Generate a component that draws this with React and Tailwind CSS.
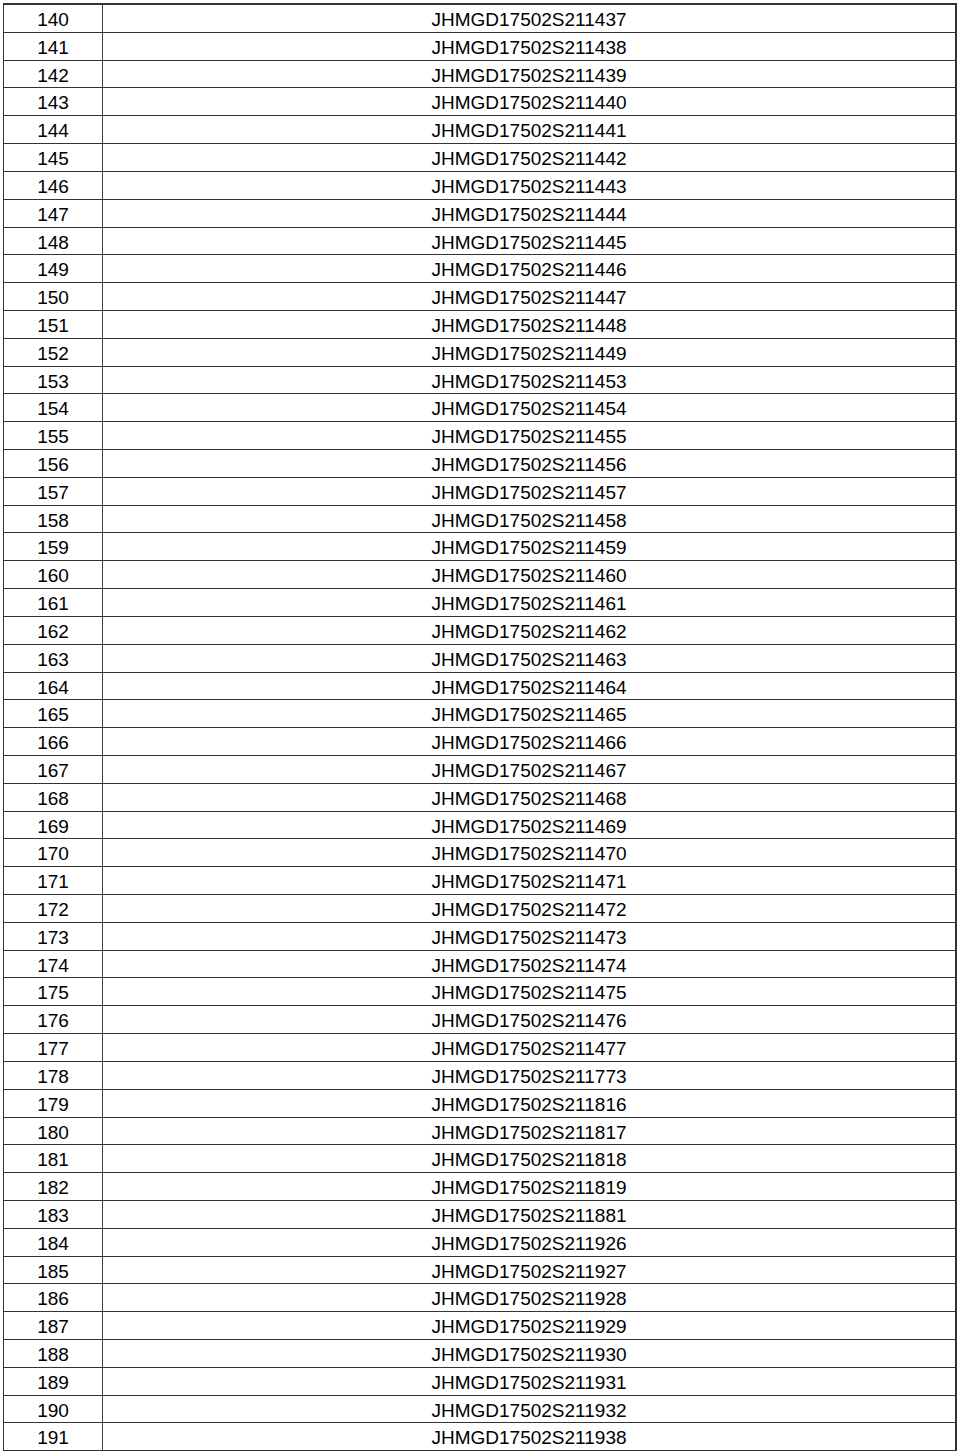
import React from 'react';

const codes = [
  '211437', '211438', '211439', '211440', '211441', '211442', '211443', '211444',
  '211445', '211446', '211447', '211448', '211449', '211453', '211454', '211455',
  '211456', '211457', '211458', '211459', '211460', '211461', '211462', '211463',
  '211464', '211465', '211466', '211467', '211468', '211469', '211470', '211471',
  '211472', '211473', '211474', '211475', '211476', '211477', '211773', '211816',
  '211817', '211818', '211819', '211881', '211926', '211927', '211928', '211929',
  '211930', '211931', '211932', '211938',
];

function App() {
  return (
    <div className="bg-white w-[960px] h-[1452px] overflow-hidden pt-[3px] pl-[3px]">
      <div
        className="w-[954px] border-t-2 border-l border-r-2 border-[#333] text-[19px] text-black"
        style={{ fontFamily: '"Liberation Sans", Arial, sans-serif' }}
      >
        {codes.map((code, i) => (
          <div key={code} className="flex h-[27.82px] border-b-[1.5px] border-[#333]">
            <div className="w-[99px] border-r-[1.5px] border-[#444] text-center leading-[20px] pt-[5px]">
              {140 + i}
            </div>
            <div className="flex-1 text-center leading-[20px] pt-[5px]">
              JHMGD17502S{code}
            </div>
          </div>
        ))}
      </div>
    </div>
  );
}

export default App;
